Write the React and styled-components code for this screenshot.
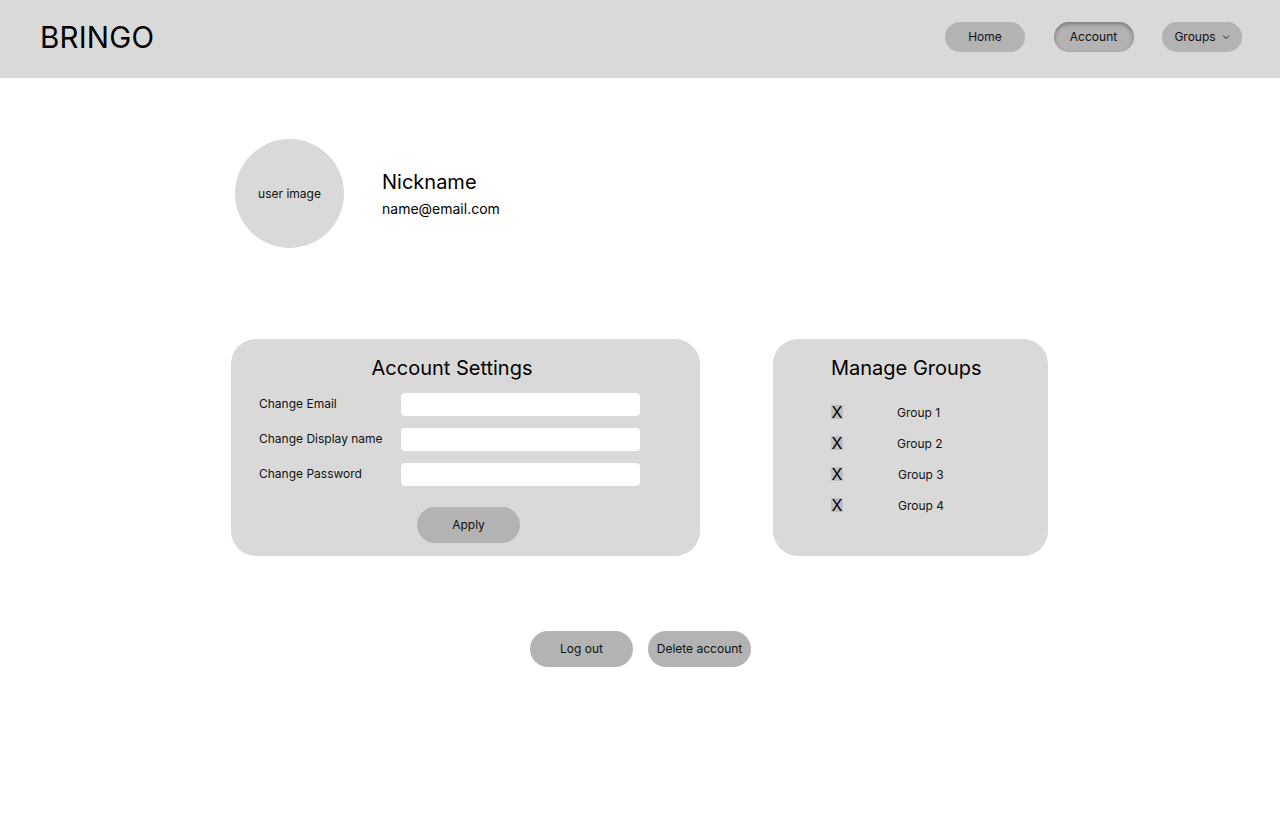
import React from "react";
import styled, { createGlobalStyle } from "styled-components";

const Global = createGlobalStyle`
  html, body { margin: 0; padding: 0; background: #fff; }
  body { font-family: Inter, "Noto Sans", "Liberation Sans", sans-serif; color: #000; }
  * { box-sizing: border-box; }
`;

const Header = styled.header`
  height: 78px;
  background: #d9d9d9;
  display: flex;
  align-items: center;
  justify-content: space-between;
  padding: 0 38px 0 40px;
`;

const Logo = styled.div`
  font-size: 29.5px;
  font-weight: 400;
  letter-spacing: 0.2px;
  line-height: 1;
  margin-top: -2px;
`;

const Nav = styled.nav`
  display: flex;
  gap: 28.5px;
  margin-top: -4px;
`;

const NavButton = styled.button`
  width: 80px;
  height: 30px;
  border: none;
  border-radius: 15px;
  background: #b3b3b3;
  font-family: inherit;
  font-size: 12px;
  line-height: 14px;
  color: #111;
  display: flex;
  align-items: center;
  justify-content: center;
  gap: 6px;
  padding: 0 0 1px;
  box-shadow: ${(p) => (p.$active ? "inset 0 2px 4px rgba(0,0,0,0.35)" : "none")};
`;

const Main = styled.main`
  display: flex;
  flex-direction: column;
`;

const Profile = styled.section`
  display: flex;
  align-items: center;
  padding: 61px 0 0 235px;
  gap: 38px;
`;

const Avatar = styled.div`
  width: 109px;
  height: 109px;
  border-radius: 50%;
  background: #d9d9d9;
  display: flex;
  align-items: center;
  justify-content: center;
  font-size: 12px;
  color: #111;
`;

const Identity = styled.div`
  display: flex;
  flex-direction: column;
  gap: 6px;
  margin-top: -1px;
`;

const Nickname = styled.div`
  font-size: 20px;
  line-height: 24px;
`;

const Email = styled.div`
  font-size: 14px;
  line-height: 17px;
`;

const Cards = styled.section`
  display: flex;
  gap: 73px;
  padding: 91px 0 0 231px;
`;

const Card = styled.div`
  width: ${(p) => p.$w}px;
  height: 217px;
  background: #d9d9d9;
  border-radius: 25px;
  display: flex;
  flex-direction: column;
`;

const CardTitle = styled.h2`
  margin: 0;
  font-size: 20px;
  font-weight: 400;
  line-height: 24px;
`;

const SettingsCard = styled(Card)`
  padding: 17px 0 0 28px;
  align-items: flex-start;
`;

const SettingsTitle = styled(CardTitle)`
  align-self: stretch;
  text-align: center;
  padding-right: 55px;
  margin-bottom: 13px;
`;

const FormRow = styled.label`
  display: flex;
  align-items: center;
  height: 23px;
  margin-bottom: 12px;
`;

const Label = styled.span`
  width: 142px;
  font-size: 12px;
  color: #111;
  margin-top: -2px;
`;

const Input = styled.input`
  width: 239px;
  height: 23px;
  border: none;
  border-radius: 4px;
  background: #fff;
  outline: none;
`;

const Pill = styled.button`
  width: 103px;
  height: 36px;
  border: none;
  border-radius: 18px;
  background: #b3b3b3;
  font-family: inherit;
  font-size: 12px;
  line-height: 14px;
  color: #111;
  padding: 0 0 1px;
`;

const ApplyButton = styled(Pill)`
  margin: 9px 0 0 158px;
`;

const GroupsCard = styled(Card)`
  padding: 17px 0 0 58px;
`;

const GroupList = styled.ul`
  list-style: none;
  margin: 23px 0 0;
  padding: 0;
  display: flex;
  flex-direction: column;
  gap: 13px;
`;

const GroupRow = styled.li`
  display: flex;
  align-items: center;
  height: 18px;
`;

const RemoveBox = styled.span`
  width: 12px;
  height: 14px;
  background: #bfbfbf;
  display: flex;
  align-items: center;
  justify-content: center;
  font-size: 16px;
  line-height: 1;
  color: #000;
`;

const GroupName = styled.span`
  font-size: 12px;
  color: #111;
  margin-left: ${(p) => p.$offset}px;
`;

const Actions = styled.section`
  display: flex;
  justify-content: center;
  gap: 15px;
  padding: 75px 0 0 1px;
`;

const Chevron = () => (
  <svg width="8" height="8" viewBox="0 0 8 8" fill="none">
    <path d="M1.5 3 L4 5.5 L6.5 3" stroke="#222" strokeWidth="1" strokeLinecap="round" strokeLinejoin="round" />
  </svg>
);

export default function App() {
  const groups = [
    { name: "Group 1", offset: 54 },
    { name: "Group 2", offset: 54 },
    { name: "Group 3", offset: 55 },
    { name: "Group 4", offset: 55 },
  ];
  return (
    <>
      <Global />
      <Header>
        <Logo>BRINGO</Logo>
        <Nav>
          <NavButton>Home</NavButton>
          <NavButton $active>Account</NavButton>
          <NavButton>
            Groups <Chevron />
          </NavButton>
        </Nav>
      </Header>
      <Main>
        <Profile>
          <Avatar>user image</Avatar>
          <Identity>
            <Nickname>Nickname</Nickname>
            <Email>name@email.com</Email>
          </Identity>
        </Profile>
        <Cards>
          <SettingsCard $w={469}>
            <SettingsTitle>Account Settings</SettingsTitle>
            <FormRow>
              <Label>Change Email</Label>
              <Input />
            </FormRow>
            <FormRow>
              <Label>Change Display name</Label>
              <Input />
            </FormRow>
            <FormRow>
              <Label>Change Password</Label>
              <Input type="password" />
            </FormRow>
            <ApplyButton>Apply</ApplyButton>
          </SettingsCard>
          <GroupsCard $w={275}>
            <CardTitle>Manage Groups</CardTitle>
            <GroupList>
              {groups.map((g) => (
                <GroupRow key={g.name}>
                  <RemoveBox>X</RemoveBox>
                  <GroupName $offset={g.offset}>{g.name}</GroupName>
                </GroupRow>
              ))}
            </GroupList>
          </GroupsCard>
        </Cards>
        <Actions>
          <Pill>Log out</Pill>
          <Pill>Delete account</Pill>
        </Actions>
      </Main>
    </>
  );
}
